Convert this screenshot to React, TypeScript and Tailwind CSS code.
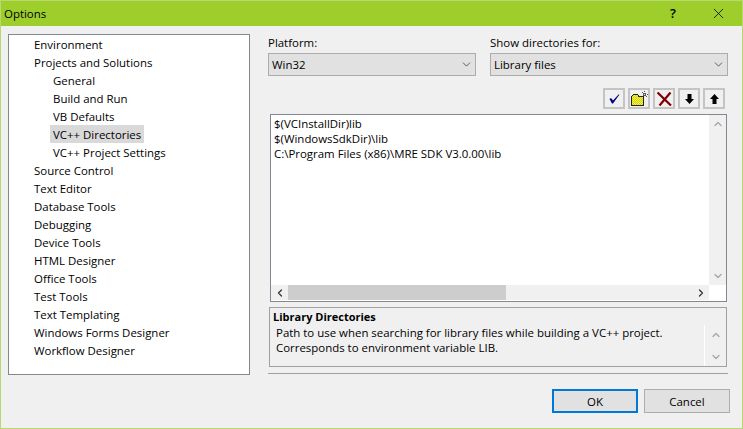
import { ChevronDown, ChevronUp, ChevronLeft, ChevronRight, X } from "lucide-react";

const tree: [string, boolean, boolean][] = [
  ["Environment", false, false],
  ["Projects and Solutions", false, false],
  ["General", true, false],
  ["Build and Run", true, false],
  ["VB Defaults", true, false],
  ["VC++ Directories", true, true],
  ["VC++ Project Settings", true, false],
  ["Source Control", false, false],
  ["Text Editor", false, false],
  ["Database Tools", false, false],
  ["Debugging", false, false],
  ["Device Tools", false, false],
  ["HTML Designer", false, false],
  ["Office Tools", false, false],
  ["Test Tools", false, false],
  ["Text Templating", false, false],
  ["Windows Forms Designer", false, false],
  ["Workflow Designer", false, false],
];

function Select({ value, width }: { value: string; width: string }) {
  return (
    <div className={`${width} h-[23px] flex items-center justify-between border border-[#acacac] bg-[#e1e1e1] pl-[3px] pr-[2px]`}>
      <span>{value}</span>
      <ChevronDown size={13} strokeWidth={1.4} className="text-[#333]" />
    </div>
  );
}

function ToolButton({ children }: { children: React.ReactNode }) {
  return (
    <div className="w-[22px] h-[21px] border-2 border-[#c4c4c4] bg-[#f0f0f0] flex items-center justify-center">
      {children}
    </div>
  );
}

export default function App() {
  return (
    <div className="w-[743px] h-[429px] flex flex-col bg-[#f0f0f0] border border-[#b9d870] text-[11.45px] leading-[15px] text-[#000] font-['Open_Sans',sans-serif] overflow-hidden">
      <div className="h-[25px] shrink-0 bg-[#9dce2b] flex items-center justify-between pl-[3px] pr-[15px] pb-[1px]">
        <span>Options</span>
        <div className="flex items-center gap-[34px]">
          <span className="text-[13px] font-semibold">?</span>
          <X size={17} strokeWidth={1.1} />
        </div>
      </div>
      <div className="flex flex-1 pl-[7px] pr-[12px] pt-[8px]">
        <div className="w-[242px] h-[341px] shrink-0 border border-[#828790] bg-white flex flex-col items-start">
          {tree.map(([label, child, selected]) => (
            <div
              key={label}
              className={`h-[18px] flex items-center ${child ? "ml-[41px] px-[3px]" : "ml-[25px]"} ${selected ? "bg-[#d9d9d9]" : ""}`}
            >
              {label}
            </div>
          ))}
        </div>
        <div className="ml-[18px] flex-1 flex flex-col">
          <div className="flex gap-[14px]">
            <div>
              <div className="h-[19px] pt-[1px]">Platform:</div>
              <Select value="Win32" width="w-[208px]" />
            </div>
            <div>
              <div className="h-[19px] pt-[1px]">Show directories for:</div>
              <Select value="Library files" width="w-[238px]" />
            </div>
          </div>
          <div className="flex justify-end gap-[3px] mt-[12px] pr-[5px]">
            <ToolButton>
              <svg width="11" height="10" viewBox="0 0 11 10"><path d="M0.5 5 L2 4 L4 6.5 L9.5 0.5 L10.5 0.5 L4 9.5 L3 9.5 Z" fill="#000080" /></svg>
            </ToolButton>
            <ToolButton>
              <svg width="17" height="15" viewBox="0 0 17 15" shapeRendering="crispEdges">
                <defs>
                  <pattern id="dither" width="2" height="2" patternUnits="userSpaceOnUse">
                    <rect width="2" height="2" fill="#ffff00" />
                    <rect width="1" height="1" fill="#c4c45a" />
                    <rect x="1" y="1" width="1" height="1" fill="#c4c45a" />
                  </pattern>
                </defs>
                <path d="M0.5 14.5V5.5L2.5 3.5H6.5L8 5.5H12.5V14.5Z" fill="url(#dither)" stroke="#222" strokeWidth="1" />
                <path d="M11 6L15 2M13.5 0V6M16.5 3.5H10.5M11 1L16 6" stroke="#333" strokeWidth="0.8" fill="none" strokeDasharray="1 1" />
              </svg>
            </ToolButton>
            <ToolButton>
              <svg width="15" height="14" viewBox="0 0 15 14"><path d="M0.5 0.5 L14 13.5 M13.5 0.5 L2.5 13.5" stroke="#800000" strokeWidth="2.2" fill="none" /></svg>
            </ToolButton>
            <ToolButton>
              <svg width="9" height="10" viewBox="0 0 9 10"><path d="M2.5 0h4v5H9L4.5 10 0 5h2.5z" fill="#000" /></svg>
            </ToolButton>
            <ToolButton>
              <svg width="9" height="10" viewBox="0 0 9 10"><path d="M2.5 10h4V5H9L4.5 0 0 5h2.5z" fill="#000" /></svg>
            </ToolButton>
          </div>
          <div className="ml-[2px] mt-[5px] w-[457px] h-[188px] border border-[#828790] bg-white flex flex-col">
            <div className="flex-1 flex min-h-0">
              <div className="flex-1 pl-[3px] pt-[1px]">
                <div className="h-[15px]">$(VCInstallDir)lib</div>
                <div className="h-[15px]">$(WindowsSdkDir)\lib</div>
                <div className="h-[15px]">C:\Program Files (x86)\MRE SDK V3.0.00\lib</div>
              </div>
              <div className="w-[17px] bg-[#f0f0f0] flex flex-col items-center justify-between py-[3px] text-[#a6a6a6]">
                <ChevronUp size={12} strokeWidth={2.5} />
                <ChevronDown size={12} strokeWidth={2.5} />
              </div>
            </div>
            <div className="h-[15px] shrink-0 mb-[1px] bg-[#f0f0f0] flex items-center text-[#333] mr-[17px]">
              <div className="w-[17px] flex justify-center"><ChevronLeft size={12} strokeWidth={2.5} /></div>
              <div className="w-[218px] h-full bg-[#cdcdcd]" />
              <div className="flex-1" />
              <div className="w-[17px] flex justify-center"><ChevronRight size={12} strokeWidth={2.5} /></div>
            </div>
          </div>
          <div className="ml-[1px] mt-[5px] w-[458px] h-[60px] border border-[#a0a0a0] bg-[#f0f0f0] flex flex-col">
            <div className="font-bold text-[11px] pl-[3px] h-[17px] leading-[17px]">Library Directories</div>
            <div className="flex flex-1">
              <div className="flex-1 pl-[6px] leading-[15px]">
                <div>Path to use when searching for library files while building a VC++ project.</div>
                <div>Corresponds to environment variable LIB.</div>
              </div>
              <div className="w-[22px] border-l border-white flex flex-col items-center justify-between pt-[4px] pb-[3px] text-[#a6a6a6]">
                <ChevronUp size={12} strokeWidth={2.5} />
                <ChevronDown size={12} strokeWidth={2.5} />
              </div>
            </div>
          </div>
          <div className="mt-[6px] h-px bg-[#a0a0a0] w-[460px]" />
          <div className="mt-[15px] flex justify-end gap-[6px]">
            <div className="w-[86px] h-[24px] border-2 border-[#0078d7] bg-[#e1e1e1] flex items-center justify-center">OK</div>
            <div className="w-[86px] h-[24px] border border-[#adadad] bg-[#e1e1e1] flex items-center justify-center">Cancel</div>
          </div>
        </div>
      </div>
    </div>
  );
}
